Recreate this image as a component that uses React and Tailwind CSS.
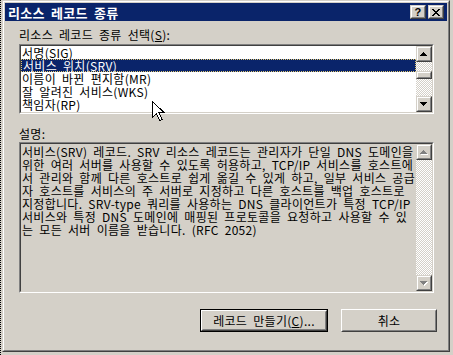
import React from "react";

const items = [
  "서명(SIG)",
  "서비스 위치(SRV)",
  "이름이 바뀐 편지함(MR)",
  "잘 알려진 서비스(WKS)",
  "책임자(RP)",
  "텍스트(TXT)",
];

const desc = [
  "서비스(SRV) 레코드. SRV 리소스 레코드는 관리자가 단일 DNS 도메인을",
  "위한 여러 서버를 사용할 수 있도록 허용하고, TCP/IP 서비스를 호스트에",
  "서 관리와 함께 다른 호스트로 쉽게 옮길 수 있게 하고, 일부 서비스 공급",
  "자 호스트를 서비스의 주 서버로 지정하고 다른 호스트를 백업 호스트로",
  "지정합니다. SRV-type 쿼리를 사용하는 DNS 클라이언트가 특정 TCP/IP",
  "서비스와 특정 DNS 도메인에 매핑된 프로토콜을 요청하고 사용할 수 있",
  "는 모든 서버 이름을 받습니다. (RFC 2052)",
];

function Raised({ className = "", children }) {
  return (
    <div className={"border border-t-[#d4d0c8] border-l-[#d4d0c8] border-r-[#404040] border-b-[#404040] bg-[#d4d0c8] " + className}>
      <div className="w-full h-full border border-t-white border-l-white border-r-[#808080] border-b-[#808080] flex items-center justify-center">
        {children}
      </div>
    </div>
  );
}

function Sunken({ className = "", children }) {
  return (
    <div className={"border border-t-[#808080] border-l-[#808080] border-r-white border-b-white " + className}>
      <div className="w-full h-full border border-t-[#404040] border-l-[#404040] border-r-[#d4d0c8] border-b-[#d4d0c8] flex overflow-hidden">
        {children}
      </div>
    </div>
  );
}

const UP = "M3 0h1v1h1v1h1v1h1v1H0V3h1V2h1V1h1z";
const DOWN = "M0 0h7v1H6v1H5v1H4v1H3V3H2V2H1V1H0z";

function Arrow({ d, disabled }) {
  return (
    <svg width="8" height="5" viewBox="0 0 8 5" shapeRendering="crispEdges">
      {disabled && <path d={d} fill="#ffffff" transform="translate(1 1)" />}
      <path d={d} fill={disabled ? "#808080" : "#000000"} />
    </svg>
  );
}

function Scrollbar({ disabled, thumb }) {
  return (
    <div className="w-4 h-full flex flex-col shrink-0">
      <Raised className="h-4 shrink-0">
        <Arrow d={UP} disabled={disabled} />
      </Raised>
      <div className="flex-1 flex flex-col bg-[image:repeating-conic-gradient(#d4d0c8_0%_25%,#ffffff_0%_50%)] bg-size-[2px_2px]">
        {thumb && <Raised className="h-[8px] mt-[9px]" />}
      </div>
      <Raised className="h-4 shrink-0">
        <Arrow d={DOWN} disabled={disabled} />
      </Raised>
    </div>
  );
}

export default function App() {
  return (
    <div className="relative w-[453px] h-[355px] bg-[#d4d0c8] border-l border-dotted border-black overflow-hidden font-['Noto_Sans_CJK_KR',sans-serif] text-[12px] leading-[13px] text-black [word-spacing:3px] tracking-[0.3px]">
      <div className="ml-[1px] w-[448px] h-[352px] border border-t-[#d4d0c8] border-l-[#d4d0c8] border-r-[#404040] border-b-[#404040]">
        <div className="h-full border border-t-white border-l-white border-r-[#808080] border-b-[#808080] p-px flex flex-col">
          {/* title bar */}
          <div className="h-[18px] bg-[#0a246a] flex items-center pl-[3px] pr-[3px]">
            <span className="text-white font-bold flex-1 text-[13px]">리소스 레코드 종류</span>
            <div className="flex gap-[2px]">
              <Raised className="w-4 h-[14px]">
                <span className="font-['Liberation_Sans',sans-serif] font-bold text-[11px] leading-none">?</span>
              </Raised>
              <Raised className="w-4 h-[14px]">
                <svg width="8" height="7" viewBox="0 0 8 7" shapeRendering="crispEdges">
                  <path d="M0 0h2v1H0z M6 0h2v1H6z M1 1h2v1H1z M5 1h2v1H5z M2 2h4v1H2z M3 3h2v1H3z M2 4h4v1H2z M1 5h2v1H1z M5 5h2v1H5z M0 6h2v1H0z M6 6h2v1H6z" fill="#000" />
                </svg>
              </Raised>
            </div>
          </div>

          {/* body */}
          <div className="flex flex-col pl-[14px] pr-[13px] pt-[7px]">
            <div>
              리소스 레코드 종류 선택(<span className="underline">S</span>):
            </div>
            <Sunken className="mt-[3px] h-[70px]">
              <div className="flex-1 bg-white flex flex-col overflow-hidden">
                {items.map((it, i) => (
                  <div
                    key={it}
                    className={
                      "h-[13px] shrink-0 pl-px whitespace-nowrap " +
                      (i === 1 ? "bg-[#0a246a] text-white border border-dotted border-[#e0c870] pl-0 leading-[11px]" : "")
                    }
                  >
                    {it}
                  </div>
                ))}
              </div>
              <Scrollbar thumb />
            </Sunken>

            <div className="mt-[13px]">설명:</div>
            <Sunken className="mt-[2px] h-[151px]">
              <div className="flex-1 bg-[#d4d0c8] pl-px pt-px">
                {desc.map((l) => (
                  <div key={l} className="whitespace-nowrap">{l}</div>
                ))}
              </div>
              <Scrollbar disabled />
            </Sunken>

            <div className="flex justify-end gap-[13px] mt-[16px] -mr-[3px]">
              <div className="border border-black">
                <div className="w-[126px] h-[21px] border border-t-white border-l-white border-r-[#404040] border-b-[#404040]">
                  <div className="h-full border border-t-[#d4d0c8] border-l-[#d4d0c8] border-r-[#808080] border-b-[#808080] flex items-center justify-center">
                    레코드 만들기(<span className="underline">C</span>)...
                  </div>
                </div>
              </div>
              <div className="w-[96px] h-[23px] border border-t-white border-l-white border-r-[#404040] border-b-[#404040]">
                <div className="h-full border border-t-[#d4d0c8] border-l-[#d4d0c8] border-r-[#808080] border-b-[#808080] flex items-center justify-center">
                  취소
                </div>
              </div>
            </div>
          </div>
        </div>
      </div>

      {/* mouse pointer */}
      <svg className="absolute left-[151px] top-[101px]" width="13" height="21" viewBox="0 0 13 21" shapeRendering="crispEdges">
        <path d="M0.5 0.5 L0.5 16.5 L4.5 12.5 L7.5 19.5 L10 18.5 L7 11.5 L12 11.5 Z" fill="#fff" stroke="#000" strokeWidth="1" />
      </svg>
    </div>
  );
}
